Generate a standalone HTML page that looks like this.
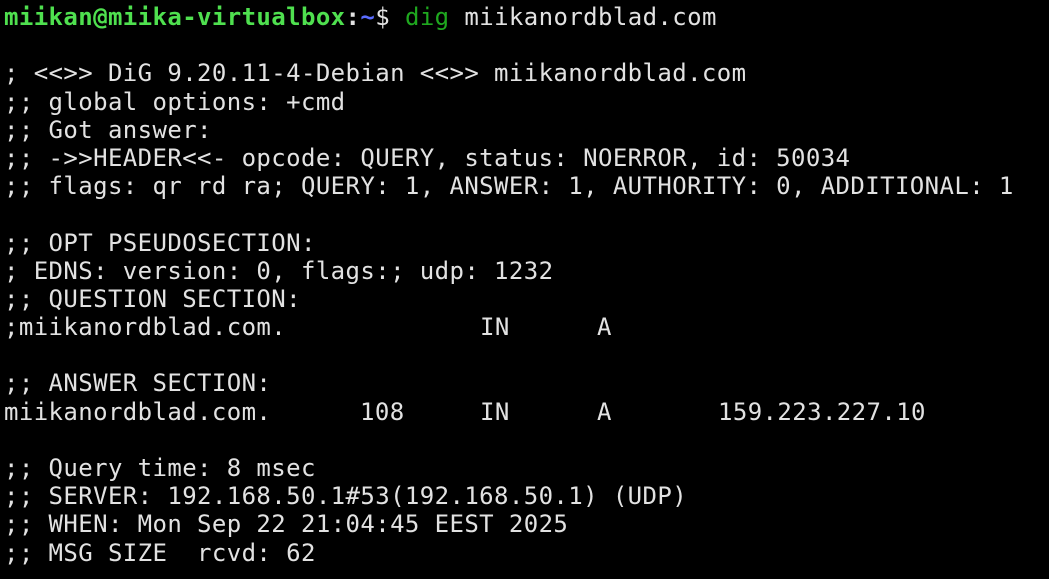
<!DOCTYPE html>
<html><head><meta charset="utf-8"><style>
html,body{margin:0;padding:0;background:#000;width:1049px;height:579px;overflow:hidden}
#t{position:absolute;left:4px;top:3px;font-family:"DejaVu Sans Mono","Liberation Mono",monospace;font-size:24px;letter-spacing:0.4px;line-height:28.2px;color:#e2e2e2}
.l{height:28.2px;position:relative;white-space:pre}
.g{color:#4fe04f;font-weight:bold}
.b{color:#5a6cff;font-weight:bold}
.d{color:#1fa81f}
.w{font-weight:bold;color:#e2e2e2}
.c{position:absolute;top:0}
</style></head><body>
<div id="t"><div class="l"><span class="g">miikan@miika-virtualbox</span><span class="w">:</span><span class="b">~</span>$ <span class="d">dig</span> miikanordblad.com</div><div class="l"></div><div class="l">; &lt;&lt;&gt;&gt; DiG 9.20.11-4-Debian &lt;&lt;&gt;&gt; miikanordblad.com</div><div class="l">;; global options: +cmd</div><div class="l">;; Got answer:</div><div class="l">;; -&gt;&gt;HEADER&lt;&lt;- opcode: QUERY, status: NOERROR, id: 50034</div><div class="l">;; flags: qr rd ra; QUERY: 1, ANSWER: 1, AUTHORITY: 0, ADDITIONAL: 1</div><div class="l"></div><div class="l">;; OPT PSEUDOSECTION:</div><div class="l">; EDNS: version: 0, flags:; udp: 1232</div><div class="l">;; QUESTION SECTION:</div><div class="l">;miikanordblad.com.<span class="c" style="left:476px">IN</span><span class="c" style="left:593px">A</span></div><div class="l"></div><div class="l">;; ANSWER SECTION:</div><div class="l">miikanordblad.com.<span class="c" style="left:356px">108</span><span class="c" style="left:476px">IN</span><span class="c" style="left:593px">A</span><span class="c" style="left:714px">159.223.227.10</span></div><div class="l"></div><div class="l">;; Query time: 8 msec</div><div class="l">;; SERVER: 192.168.50.1#53(192.168.50.1) (UDP)</div><div class="l">;; WHEN: Mon Sep 22 21:04:45 EEST 2025</div><div class="l">;; MSG SIZE  rcvd: 62</div></div>
</body></html>
